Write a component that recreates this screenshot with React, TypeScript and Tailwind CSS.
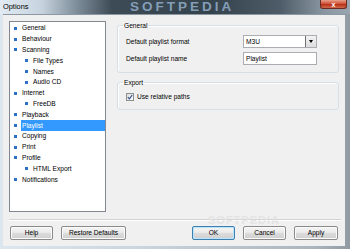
import React from 'react'

const font = {fontFamily: '"Liberation Sans", Arial, sans-serif'}

const treeItems = [
  {label: 'General', child: false},
  {label: 'Behaviour', child: false},
  {label: 'Scanning', child: false},
  {label: 'File Types', child: true},
  {label: 'Names', child: true},
  {label: 'Audio CD', child: true},
  {label: 'Internet', child: false},
  {label: 'FreeDB', child: true},
  {label: 'Playback', child: false},
  {label: 'Playlist', child: false, selected: true},
  {label: 'Copying', child: false},
  {label: 'Print', child: false},
  {label: 'Profile', child: false},
  {label: 'HTML Export', child: true},
  {label: 'Notifications', child: false},
]

function Btn({label, focused, w}: {label: string; focused?: boolean; w: string}) {
  return (
    <button
      className={`${w} h-[14px] rounded-[2px] border text-[6.6px] leading-none text-black bg-[linear-gradient(#f4f4f4,#ebebeb_45%,#dcdcdc_50%,#cfcfcf)] ${
        focused ? 'border-[#3c7fb1] shadow-[inset_0_0_0_1px_#b9e4fb]' : 'border-[#8a8a8a] shadow-[inset_0_0_0_1px_#fbfbfb]'
      }`}
    >
      {label}
    </button>
  )
}

function Tree() {
  return (
    <div className="w-[97px] h-[191px] shrink-0 bg-white border border-[#828790] pt-[1px]">
      {treeItems.map((it) => (
        <div
          key={it.label}
          className={`flex items-center h-[10.8px] ${it.child ? 'pl-[15px]' : 'pl-[4px]'}`}
        >
          <span className="w-[3px] h-[3px] bg-[#2a72c6] shrink-0" />
          <span
            className={`ml-[4px] pl-[1px] h-[10.8px] flex items-center text-[6.6px] ${
              it.selected ? 'flex-1 bg-[#3399ff] text-white' : 'text-black'
            }`}
          >
            {it.label}
          </span>
        </div>
      ))}
    </div>
  )
}

function Group({title, children}: {title: string; children: React.ReactNode}) {
  return (
    <fieldset className="border border-[#d5dfe5] rounded-[3px] shadow-[inset_1px_1px_0_#ffffff]">
      <legend className="ml-[5px] px-[1px] text-[6.6px] leading-[9px] text-black">{title}</legend>
      {children}
    </fieldset>
  )
}

export default function App() {
  return (
    <div
      className="w-[350px] h-[249px] flex flex-col overflow-hidden bg-[linear-gradient(90deg,#dce6ee,#c9d5df_40%,#aab4bc_90%,#8f9aa3)]"
      style={font}
    >
      <div className="relative h-[14px] shrink-0 flex items-center pl-[3px] overflow-hidden bg-[linear-gradient(90deg,#e2ebf2,#c6d3de_12%,#7d8d9a_22%,#3d4b56_32%,#34424c_60%,#4d5c68_80%,#8895a0_92%,#9aa6b0)]">
        <span className="relative z-10 text-[7.4px] text-black">Options</span>
        <span className="absolute left-[130px] top-0 text-[13.5px] leading-[14px] font-bold tracking-[3px] text-[#8ea7c2] opacity-90">
          SOFTPEDIA
        </span>
        <div className="absolute right-[3px] top-0 w-[27px] h-[9px] rounded-b-[3px] border border-t-0 border-[#6b2a22] bg-[linear-gradient(#e8a08c,#d0553a_45%,#b8321a_55%,#cf6a4a)] flex items-center justify-center">
          <span className="text-white text-[7px] font-bold leading-none">x</span>
        </div>
      </div>
      <div className="relative flex-1 flex flex-col ml-[3px] mr-[5px] mb-[3px] bg-[#f0f0f0] border-t border-[#8c98a2] pt-[6px] px-[6px]">
        <div className="flex gap-[11px]">
          <Tree />
          <div className="flex-1 flex flex-col gap-[5px]">
            <Group title="General">
              <div className="flex flex-col gap-[4px] pt-[5px] pb-[7px] pl-[8px] pr-[21px]">
                <div className="flex items-center">
                  <span className="w-[117px] text-[6.6px] text-black">Default playlist format</span>
                  <div className="w-[74px] h-[13px] flex bg-white border border-[#abadb3]">
                    <span className="flex-1 pl-[2px] text-[6.6px] leading-[11px] text-black">M3U</span>
                    <span className="w-[11px] h-[11px] border-l border-[#707070] bg-[linear-gradient(#f2f2f2,#dcdcdc)] flex items-center justify-center">
                      <span className="border-x-[2.5px] border-x-transparent border-t-[3px] border-t-black" />
                    </span>
                  </div>
                </div>
                <div className="flex items-center">
                  <span className="w-[117px] text-[6.6px] text-black">Default playlist name</span>
                  <div className="w-[74px] h-[13px] bg-white border border-[#abadb3] pl-[2px] text-[6.6px] leading-[11px] text-black">
                    Playlist
                  </div>
                </div>
              </div>
            </Group>
            <Group title="Export">
              <div className="flex items-center gap-[3px] pt-[5px] pb-[7px] pl-[8px]">
                <span className="w-[8px] h-[8px] border border-[#8e8f8f] bg-[linear-gradient(135deg,#dcdcdc,#fafafa)] flex items-center justify-center">
                  <svg width="6" height="6" viewBox="0 0 6 6">
                    <path d="M0.8 3.2 L2.4 4.8 L5.2 1" stroke="#2b4d8c" strokeWidth="1.1" fill="none" />
                  </svg>
                </span>
                <span className="text-[6.6px] text-black">Use relative paths</span>
              </div>
            </Group>
          </div>
        </div>
        <div className="mt-[7px] -mr-[2px] h-[2px] border-t border-[#d2d2d2] border-b border-b-white" />
        <div className="flex justify-between mt-[5px] px-[1px]">
          <div className="flex gap-[8px]">
            <Btn label="Help" w="w-[43px]" />
            <Btn label="Restore Defaults" w="w-[65px]" />
          </div>
          <div className="flex gap-[8px]">
            <Btn label="OK" w="w-[43px]" focused />
            <Btn label="Cancel" w="w-[43px]" />
            <Btn label="Apply" w="w-[44px]" />
          </div>
        </div>
        <span className="absolute left-[205px] top-[200px] text-[11px] leading-none font-bold tracking-[1px] text-[#e2e2e2] opacity-80">
          SOFTPEDIA
        </span>
      </div>
    </div>
  )
}
